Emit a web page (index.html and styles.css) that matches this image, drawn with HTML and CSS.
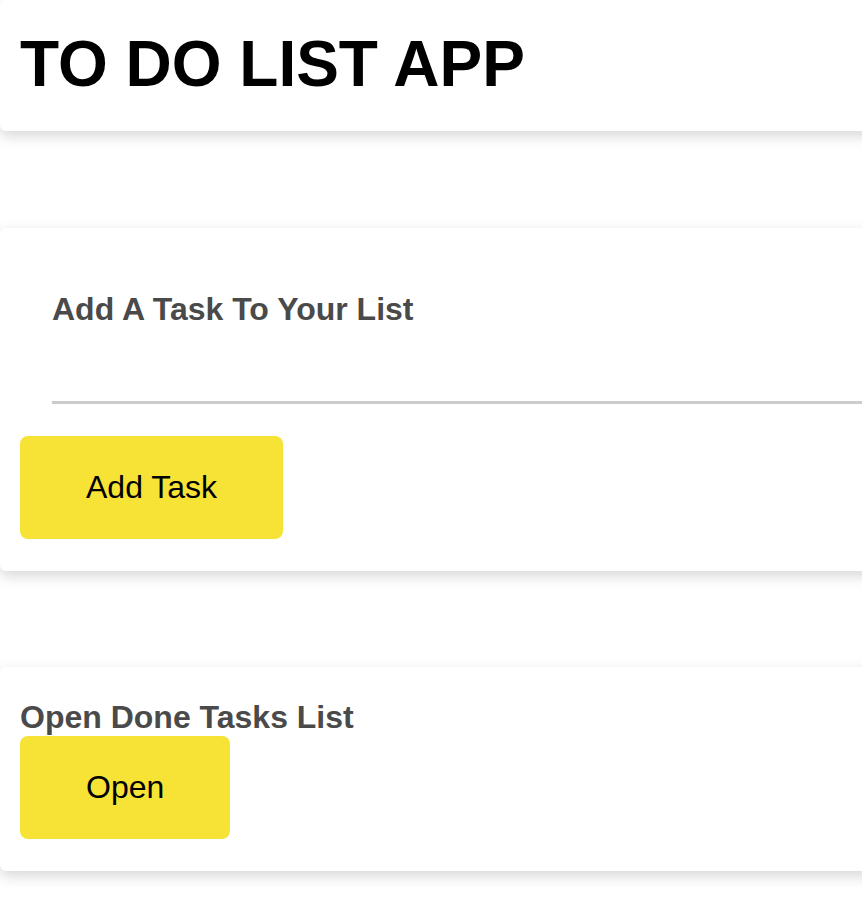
FILE: index.html
```html
<!DOCTYPE html>
<html lang="en">
<head>
<meta charset="utf-8">
<title>To Do List App</title>
<link rel="stylesheet" href="styles.css">
</head>
<body>
<header class="card header">
  <h1 class="title">TO DO LIST APP</h1>
</header>
<main class="content">
  <section class="card add-card">
    <form class="add-form">
      <label class="label" for="task">Add A Task To Your List</label>
      <input class="task-input" id="task" type="text">
    </form>
    <button class="btn" type="button">Add Task</button>
  </section>
  <section class="card done-card">
    <h2 class="label">Open Done Tasks List</h2>
    <button class="btn" type="button">Open</button>
  </section>
</main>
</body>
</html>
```
FILE: styles.css
```css
html, body {
  margin: 0;
  padding: 0;
  background: #ffffff;
}
body {
  font-family: "Liberation Sans", Arial, sans-serif;
  width: 880px;
  overflow: hidden;
}
.card {
  background: #ffffff;
  border-radius: 6px;
  box-shadow: 0 5px 14px rgba(0, 0, 0, 0.16);
  box-sizing: border-box;
}
.header {
  height: 131px;
  padding: 27px 20px 0;
}
.title {
  margin: 0;
  font-size: 64px;
  font-weight: 700;
  line-height: 74px;
  color: #000;
}
.content {
  display: flex;
  flex-direction: column;
  gap: 96px;
  padding-top: 97px;
  padding-bottom: 40px;
}
.add-card {
  padding: 64px 0 32px 20px;
}
.add-form {
  display: flex;
  flex-direction: column;
  padding-left: 32px;
}
.label {
  display: block;
  margin: 0;
  font-size: 32px;
  font-weight: 700;
  line-height: 35px;
  color: #4a4a4a;
}
.task-input {
  display: block;
  height: 74px;
  border: 0;
  border-bottom: 3px solid #cccccc;
  outline: none;
  padding: 0;
  background: transparent;
  font: inherit;
}
.add-card .btn {
  margin-top: 32px;
}
.done-card {
  padding: 33px 0 32px 20px;
}
.done-card .btn {
  margin-top: 1px;
}
.btn {
  display: block;
  height: 103px;
  padding: 0 66px;
  border: 0;
  border-radius: 8px;
  background: #f7e336;
  color: #000;
  font-family: "Liberation Sans", Arial, sans-serif;
  font-size: 32px;
  cursor: pointer;
}
```
